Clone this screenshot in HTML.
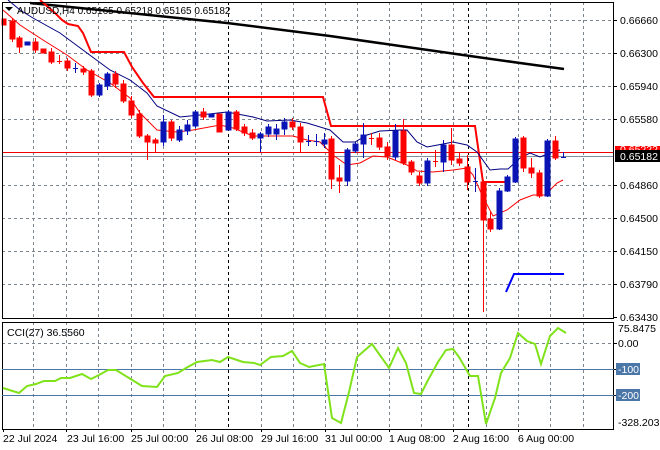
<!DOCTYPE html>
<html><head><meta charset="utf-8"><style>
html,body{margin:0;padding:0;background:#fff;width:660px;height:450px;overflow:hidden}
svg{display:block}
text{font-family:"Liberation Sans",sans-serif;font-size:10.5px;fill:#000}
</style></head><body>
<svg width="660" height="450" viewBox="0 0 660 450" xmlns="http://www.w3.org/2000/svg">
<g stroke="#7a8590" stroke-width="1" stroke-dasharray="3,3" fill="none">
<path d="M33.5 2V318M66.5 2V318M98.5 2V318M131.5 2V318M163.5 2V318M195.5 2V318M261.5 2V318M293.5 2V318M325.5 2V318M357.5 2V318M389.5 2V318M421.5 2V318M453.5 2V318M486.5 2V318M518.5 2V318M550.5 2V318M583.5 2V318"/>
<path d="M33.5 322V429M66.5 322V429M98.5 322V429M131.5 322V429M163.5 322V429M195.5 322V429M261.5 322V429M293.5 322V429M325.5 322V429M357.5 322V429M389.5 322V429M421.5 322V429M453.5 322V429M486.5 322V429M518.5 322V429M550.5 322V429M583.5 322V429"/>
<path d="M2 20.5H614M2 53.5H614M2 86.5H614M2 119.5H614M2 185.5H614M2 218.5H614M2 251.5H614M2 284.5H614M2 343.5H614"/>
</g>
<g stroke="#000" stroke-dasharray="3,3" fill="none"><path d="M228.5 2V318M468.5 2V318M228.5 322V429M468.5 322V429"/></g>
<polyline points="30,3 100,10 227,23 330,36 400,46 470,56 520,63 564,69" fill="none" stroke="#000" stroke-width="2.5"/>
<line x1="2" y1="152.5" x2="614" y2="152.5" stroke="#e00" stroke-width="1"/>
<line x1="2" y1="156.5" x2="614" y2="156.5" stroke="#8090a0" stroke-width="1"/>
<polyline points="40,0 55,13 62,20 68,24 78,26 83,33 91,52 124,52 132,67 143,83 154,97 323,97 331,126 475,126 483,182 505,182" fill="none" stroke="#f00" stroke-width="2"/>
<polyline points="8,0 20,10 33,18 60,33 87,53 110,70 130,80 147,93 157,106 180,117 200,115 227,112 253,117 267,121 290,120 307,123 330,130 343,142 355,142 367,135 380,131 400,130 407,130 417,142 427,147 443,144 453,142 467,145 477,152 490,170 500,169 508,169 520,158 530,153 540,157 550,153 560,150" fill="none" stroke="#000080" stroke-width="1"/>
<polyline points="3,10 20,25 43,40 67,55 87,70 110,83 130,98 140,113 157,130 177,132 193,130 220,125 233,128 253,136 277,136 293,136 307,140 320,142 333,155 347,165 360,163 373,156 387,157 407,165 417,171 433,172 453,170 467,168 473,175 483,197 493,216 507,210 520,200 533,195 545,195 557,183 563,180" fill="none" stroke="#f00" stroke-width="1"/>
<polyline points="506,292 514,274 564,274" fill="none" stroke="#0000ff" stroke-width="2"/>
<g fill="#f00" stroke="#f00">
<rect x="2" y="19" width="4" height="6"/>
<line x1="12.5" y1="18" x2="12.5" y2="42"/><rect x="10" y="21" width="5" height="18"/>
<line x1="19.5" y1="36" x2="19.5" y2="53"/><rect x="17" y="38" width="5" height="9"/>
<rect x="33" y="42" width="5" height="8"/><line x1="35.5" y1="38" x2="35.5" y2="53"/>
<rect x="41" y="49" width="5" height="4"/>
<line x1="51.5" y1="48" x2="51.5" y2="64"/><rect x="49" y="52" width="5" height="10"/>
<line x1="59.5" y1="55" x2="59.5" y2="64"/><line x1="57" y1="61.5" x2="62" y2="61.5"/>
<line x1="67.5" y1="58" x2="67.5" y2="71"/><rect x="65" y="61" width="5" height="7"/>
<rect x="81" y="69" width="5" height="3"/><line x1="83.5" y1="66" x2="83.5" y2="75"/>
<line x1="91.5" y1="69" x2="91.5" y2="97"/><rect x="89" y="71" width="5" height="24"/>
<line x1="115.5" y1="71" x2="115.5" y2="88"/><rect x="113" y="74" width="5" height="10"/>
<line x1="123.5" y1="80" x2="123.5" y2="103"/><rect x="121" y="84" width="5" height="17"/>
<line x1="131.5" y1="96" x2="131.5" y2="118"/><rect x="129" y="101" width="5" height="14"/>
<line x1="139.5" y1="110" x2="139.5" y2="138"/><rect x="137" y="114" width="5" height="22"/>
<line x1="147.5" y1="134" x2="147.5" y2="160"/><rect x="145" y="136" width="5" height="6"/>
<line x1="155.5" y1="138" x2="155.5" y2="153"/><rect x="153" y="140" width="5" height="3"/>
<line x1="171.5" y1="120" x2="171.5" y2="141"/><rect x="169" y="122" width="5" height="16"/>
<line x1="203.5" y1="108" x2="203.5" y2="120"/><rect x="201" y="112" width="5" height="5"/>
<rect x="217" y="114" width="5" height="18"/>
<rect x="234" y="112" width="5" height="17"/><line x1="236.5" y1="110" x2="236.5" y2="131"/>
<line x1="244.5" y1="124" x2="244.5" y2="136"/><rect x="242" y="127" width="5" height="6"/>
<line x1="252.5" y1="129" x2="252.5" y2="140"/><rect x="250" y="133" width="5" height="5"/>
<line x1="292.5" y1="118" x2="292.5" y2="130"/><rect x="290" y="122" width="5" height="5"/>
<line x1="300.5" y1="123" x2="300.5" y2="152"/><rect x="298" y="127" width="5" height="15"/>
<line x1="331.5" y1="136" x2="331.5" y2="189"/><rect x="329" y="139" width="5" height="40"/>
<line x1="339.5" y1="165" x2="339.5" y2="193"/><rect x="337" y="178" width="5" height="3"/>
<line x1="371.5" y1="133" x2="371.5" y2="145"/><line x1="369" y1="138.5" x2="374" y2="138.5"/>
<line x1="379.5" y1="133" x2="379.5" y2="150"/><rect x="377" y="138" width="5" height="9"/>
<line x1="387.5" y1="142" x2="387.5" y2="160"/><rect x="385" y="147" width="5" height="9"/>
<line x1="403.5" y1="119" x2="403.5" y2="165"/><rect x="401" y="131" width="5" height="32"/>
<line x1="411.5" y1="160" x2="411.5" y2="175"/><rect x="409" y="162" width="5" height="10"/>
<line x1="419.5" y1="172" x2="419.5" y2="186"/><rect x="417" y="176" width="5" height="7"/>
<line x1="435.5" y1="150" x2="435.5" y2="167"/><line x1="433" y1="161.5" x2="438" y2="161.5"/>
<line x1="451.5" y1="128" x2="451.5" y2="165"/><rect x="449" y="145" width="5" height="15"/>
<line x1="459.5" y1="153" x2="459.5" y2="166"/><rect x="457" y="159" width="5" height="4"/>
<line x1="467.5" y1="155" x2="467.5" y2="190"/><rect x="465" y="167" width="5" height="15"/>
<line x1="483.5" y1="180" x2="483.5" y2="312"/><rect x="481" y="182" width="5" height="38"/>
<line x1="490.5" y1="212" x2="490.5" y2="232"/><rect x="488" y="219" width="5" height="10"/>
<line x1="523.5" y1="136" x2="523.5" y2="172"/><rect x="521" y="138" width="5" height="30"/>
<line x1="531.5" y1="158" x2="531.5" y2="178"/><rect x="529" y="168" width="5" height="5"/>
<line x1="539.5" y1="170" x2="539.5" y2="198"/><rect x="537" y="173" width="5" height="23"/>
<line x1="555.5" y1="136" x2="555.5" y2="160"/><rect x="553" y="141" width="5" height="17"/>
</g>
<g fill="#0a14b4" stroke="#0a14b4">
<rect x="25" y="42" width="5" height="3"/>
<line x1="75.5" y1="63" x2="75.5" y2="73"/><line x1="73" y1="68.5" x2="78" y2="68.5"/>
<rect x="97" y="85" width="5" height="10"/><line x1="99.5" y1="83" x2="99.5" y2="97"/>
<rect x="105" y="74" width="5" height="12"/><line x1="107.5" y1="72" x2="107.5" y2="90"/>
<line x1="163.5" y1="115" x2="163.5" y2="146"/><rect x="161" y="122" width="5" height="20"/>
<line x1="179.5" y1="126" x2="179.5" y2="142"/><rect x="177" y="130" width="5" height="10"/>
<line x1="187.5" y1="120" x2="187.5" y2="135"/><rect x="185" y="125" width="5" height="6"/>
<line x1="195.5" y1="110" x2="195.5" y2="128"/><rect x="193" y="112" width="5" height="14"/>
<rect x="209" y="114" width="5" height="3"/>
<line x1="228.5" y1="110" x2="228.5" y2="130"/><rect x="226" y="112" width="5" height="18"/>
<line x1="260.5" y1="132" x2="260.5" y2="152"/><rect x="258" y="134" width="5" height="4"/>
<line x1="268.5" y1="124" x2="268.5" y2="137"/><rect x="266" y="127" width="5" height="7"/>
<line x1="276.5" y1="124" x2="276.5" y2="140"/><rect x="274" y="129" width="5" height="5"/>
<line x1="284.5" y1="118" x2="284.5" y2="135"/><rect x="282" y="122" width="5" height="7"/>
<line x1="308.5" y1="135" x2="308.5" y2="146"/><line x1="306" y1="141.5" x2="311" y2="141.5"/>
<line x1="316.5" y1="134" x2="316.5" y2="146"/><line x1="314" y1="141.5" x2="319" y2="141.5"/>
<line x1="324.5" y1="133" x2="324.5" y2="148"/><rect x="322" y="140" width="5" height="4"/>
<line x1="347.5" y1="148" x2="347.5" y2="186"/><rect x="345" y="150" width="5" height="31"/>
<line x1="355.5" y1="142" x2="355.5" y2="153"/><rect x="353" y="144" width="5" height="7"/>
<line x1="363.5" y1="123" x2="363.5" y2="158"/><rect x="361" y="135" width="5" height="9"/>
<line x1="395.5" y1="124" x2="395.5" y2="160"/><rect x="393" y="131" width="5" height="26"/>
<line x1="427.5" y1="158" x2="427.5" y2="186"/><rect x="425" y="161" width="5" height="22"/>
<line x1="443.5" y1="140" x2="443.5" y2="172"/><rect x="441" y="145" width="5" height="17"/>
<line x1="475.5" y1="168" x2="475.5" y2="192"/><line x1="473" y1="181.5" x2="478" y2="181.5"/>
<line x1="499.5" y1="188" x2="499.5" y2="230"/><rect x="497" y="191" width="5" height="38"/>
<line x1="507.5" y1="175" x2="507.5" y2="192"/><rect x="505" y="177" width="5" height="14"/>
<line x1="515.5" y1="137" x2="515.5" y2="183"/><rect x="513" y="139" width="5" height="43"/>
<line x1="547.5" y1="139" x2="547.5" y2="197"/><rect x="545" y="141" width="5" height="55"/>
<line x1="563.5" y1="152" x2="563.5" y2="158"/><line x1="561" y1="157.5" x2="566" y2="157.5"/>
</g>
<path d="M5 7h8l-4 4z" fill="#000"/>
<text x="17" y="14" style="font-size:10px">AUDUSD,H4 0.65165 0.65218 0.65165 0.65182</text>
<rect x="2.5" y="2.5" width="611" height="316" fill="none" stroke="#000"/>
<rect x="2.5" y="322.5" width="611" height="107" fill="none" stroke="#000"/>
<g>
<text x="620" y="24">0.66660</text>
<text x="620" y="57">0.66300</text>
<text x="620" y="90">0.65940</text>
<text x="620" y="123">0.65580</text>
<text x="620" y="189">0.64860</text>
<text x="620" y="222">0.64500</text>
<text x="620" y="255">0.64150</text>
<text x="620" y="288">0.63790</text>
<text x="620" y="321">0.63430</text>
</g>
<path d="M614 20.5h3M614 53.5h3M614 86.5h3M614 119.5h3M614 185.5h3M614 218.5h3M614 251.5h3M614 284.5h3M614 317.5h3M614 343.5h3M614 369.5h3M614 395.5h3" stroke="#000"/>
<rect x="615" y="146" width="45" height="8" fill="#f00"/>
<text x="620" y="153" style="fill:#fff">0.65222</text>
<rect x="615" y="150" width="45" height="12" fill="#000"/>
<text x="620" y="160" style="fill:#fff">0.65182</text>
<line x1="2" y1="369.5" x2="614" y2="369.5" stroke="#4a76a8"/>
<line x1="2" y1="395.5" x2="614" y2="395.5" stroke="#4a76a8"/>
<polyline points="3,388 19,393 27,386 36,384 44,381 55,381 61,378 70,378 82,374 91,379 99,375 108,370 116,370 129,378 142,386 157,387 165,376 178,373 186,368 197,362 212,360 220,362 228,357 243,362 254,363 260,365 271,357 283,356 292,351 300,363 309,367 324,364 332,418 341,423 349,392 357,357 372,344 389,368 398,348 406,363 414,393 421,394 427,382 438,362 446,350 453,349 459,357 470,376 478,376 486,424 495,398 501,373 510,358 518,333 527,341 535,344 541,364 550,336 558,328 566,333" fill="none" stroke="#7fe21a" stroke-width="2"/>
<text x="7" y="336">CCI(27) 36.5560</text>
<text x="618" y="332">75.8475</text>
<text x="618" y="347">0.00</text>
<rect x="616" y="363" width="24" height="12" fill="#4a76a8"/>
<text x="618" y="373" style="fill:#fff">-100</text>
<rect x="616" y="389" width="24" height="12" fill="#4a76a8"/>
<text x="618" y="399" style="fill:#fff">-200</text>
<text x="618" y="426">-328.203</text>
<path d="M3.5 429v3M66.5 429v3M131.5 429v3M195.5 429v3M261.5 429v3M325.5 429v3M389.5 429v3M453.5 429v3M518.5 429v3" stroke="#000"/>
<text x="3" y="442">22 Jul 2024</text>
<text x="67" y="442">23 Jul 16:00</text>
<text x="131" y="442">25 Jul 00:00</text>
<text x="196" y="442">26 Jul 08:00</text>
<text x="261" y="442">29 Jul 16:00</text>
<text x="325" y="442">31 Jul 00:00</text>
<text x="389" y="442">1 Aug 08:00</text>
<text x="453" y="442">2 Aug 16:00</text>
<text x="518" y="442">6 Aug 00:00</text>
</svg>
</body></html>
